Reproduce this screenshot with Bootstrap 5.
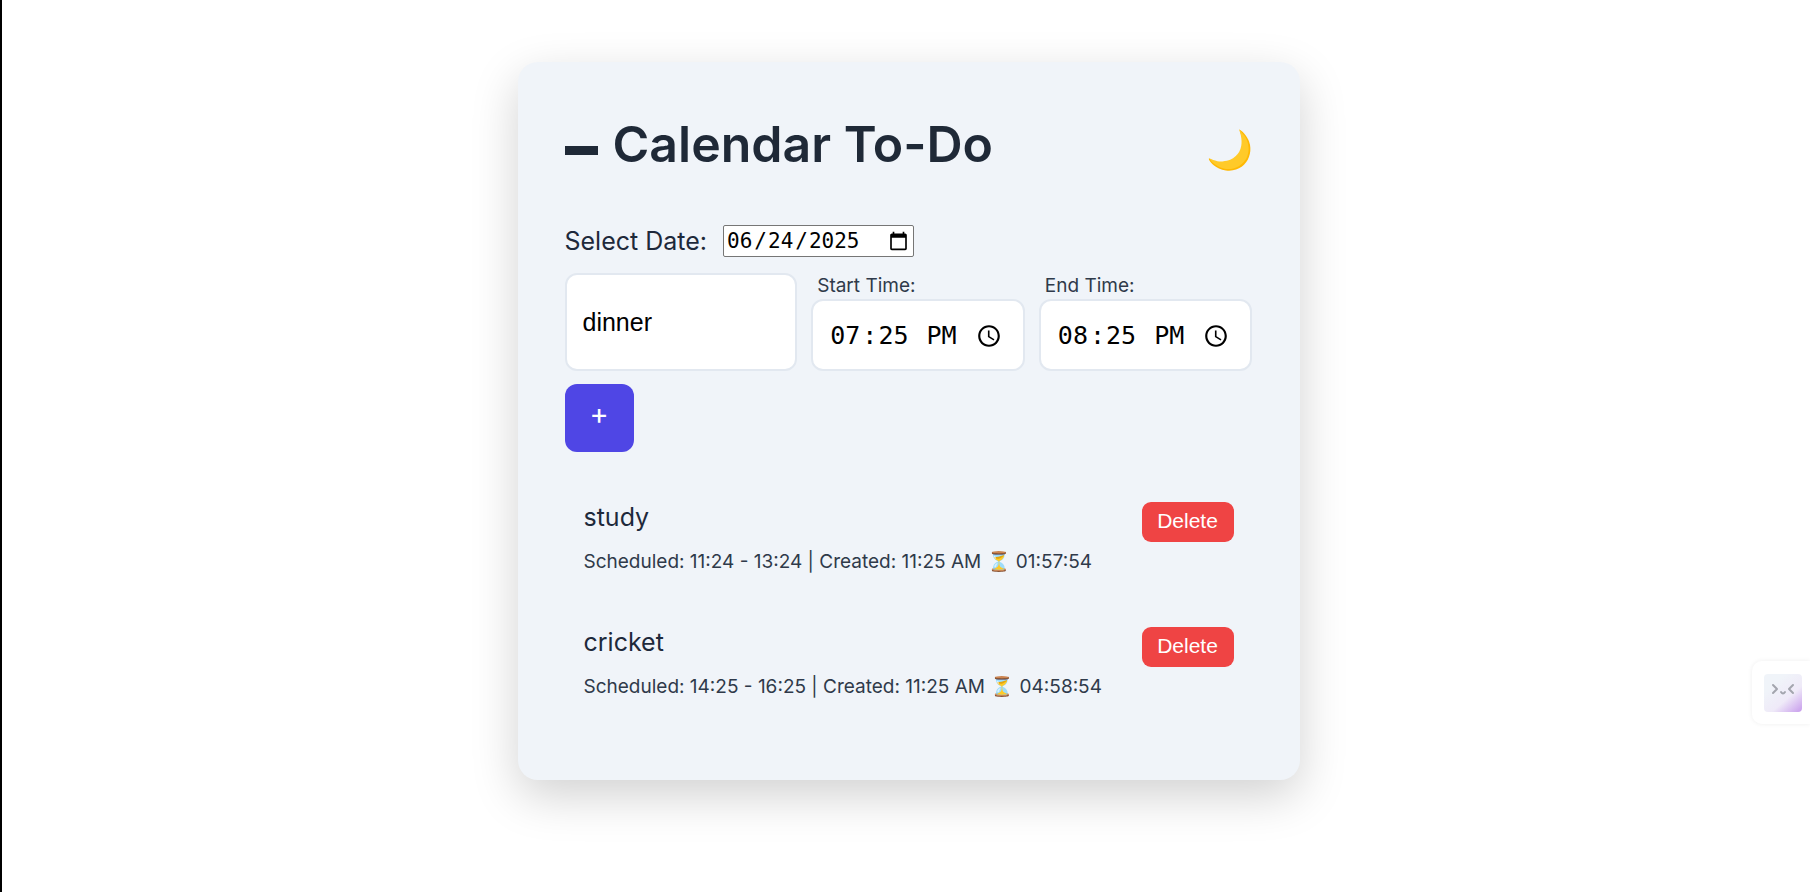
<!DOCTYPE html>
<html lang="en">
<head>
<meta charset="utf-8">
<meta name="viewport" content="width=device-width, initial-scale=1">
<title>Calendar To-Do</title>
<link href="https://cdn.jsdelivr.net/npm/bootstrap@5.3.0/dist/css/bootstrap.min.css" rel="stylesheet">
<style>
  body { font-family: Inter, "Liberation Sans", sans-serif; font-size: 25px; line-height: 30px; color: #1e293b; background: #fff; border-left: 2px solid #000; padding-left: 5px; min-height: 100vh; }
  .planner { max-width: 782px; margin-top: 62px; margin-bottom: 62px; padding: 47px; background: #f0f4f9; border-radius: 20px; box-shadow: 0 16px 47px rgba(0,0,0,.18); }
  .planner-head { height: 70px; margin-bottom: 46px; }
  .planner-title { font-size: 50px; line-height: 60px; font-weight: 600; color: #1f2937; }
  .title-bar { width: 33px; height: 9px; margin-right: 15px; background: #1f2937; margin-top: 12px; }
  .theme-btn { font-size: 38px; line-height: 44px; background: none; border: 0; padding: 0; margin-top: 10px; }
  .date-label { margin-right: 16px; }
  .date-box { font-family: "DejaVu Sans Mono", monospace; font-size: 21px; line-height: 25px; color: #000; background: #fff; border: 1px solid #767676; border-radius: 2px; padding: 2px; width: 191px; height: 32px; }
  .date-box::-webkit-datetime-edit-month-field,
  .date-box::-webkit-datetime-edit-day-field,
  .date-box::-webkit-datetime-edit-year-field { padding: 0 2px 0 1px; }
  .entry-form { gap: 13px 14px; margin-top: 16px; }
  .entry-box { width: 100%; font-size: 25px; line-height: 30px; color: #000; background: #fff; border: 2px solid #e2e8f0; border-radius: 12px; padding: 16px; }
  .task-col { flex: 232 1 0; }
  .time-col { flex: 213 1 0; }
  .task-col .entry-box { font-family: "Liberation Sans", Arial, sans-serif; height: 98px; }
  .time-col .entry-box { font-family: "DejaVu Sans Mono", monospace; height: 72px; padding: 17px 18px 15px 16px; }
  .time-col .entry-box::-webkit-datetime-edit-hour-field,
  .time-col .entry-box::-webkit-datetime-edit-minute-field,
  .time-col .entry-box::-webkit-datetime-edit-ampm-field { padding: 0 2px 0 1px; }
  .time-label { font-size: 19px; line-height: 22px; margin-bottom: 2px; padding-left: 6px; color: #2f3a4a; }
  .add-btn { font-family: Inter, sans-serif; width: 69px; height: 68px; border-radius: 12px; background: #4f46e5; color: #fff; font-size: 29px; line-height: 30px; padding: 0 0 8px; }
  .add-btn:hover { background: #4338ca; color: #fff; }
  .task-list { margin-top: 31px; }
  .task-row { padding: 19px; height: 125px; }
  .task-meta { font-size: 19px; line-height: 24px; margin-top: 18px; color: #2f3a4a; }
  .del-btn { font-family: "Liberation Sans", Arial, sans-serif; font-size: 21px; line-height: 24px; width: 92px; height: 40px; padding: 0 0 2px; border-radius: 9px; background: #ef4444; color: #fff; }
  .del-btn:hover { background: #dc2626; color: #fff; }
  .helper-tab { right: 0; top: 661px; padding: 13px 8px 12px 12px; background: #fff; border-radius: 10px 0 0 10px; box-shadow: 0 0 5px rgba(0,0,0,.07); border: 0; line-height: 0; }
</style>
</head>
<body>
<main class="planner mx-auto">
  <header class="planner-head d-flex justify-content-between align-items-center">
    <h1 class="planner-title d-flex align-items-center mb-0"><span class="title-bar"></span>Calendar To-Do</h1>
    <button type="button" class="theme-btn" aria-label="Switch theme">🌙</button>
  </header>
  <div class="d-flex align-items-center">
    <label class="date-label" for="day">Select Date:</label>
    <input class="date-box" type="date" id="day" value="2025-06-24">
  </div>
  <form class="entry-form d-flex flex-wrap align-items-end">
    <div class="task-col"><input class="entry-box d-block" type="text" value="dinner" aria-label="Task"></div>
    <div class="time-col">
      <label class="time-label d-block" for="start">Start Time:</label>
      <input class="entry-box d-block" type="time" id="start" value="19:25">
    </div>
    <div class="time-col">
      <label class="time-label d-block" for="end">End Time:</label>
      <input class="entry-box d-block" type="time" id="end" value="20:25">
    </div>
    <div class="w-100"><button type="button" class="btn border-0 add-btn" aria-label="Add task">+</button></div>
  </form>
  <ul class="task-list list-unstyled mb-0">
    <li class="task-row d-flex justify-content-between align-items-start">
      <div><div>study</div><div class="task-meta">Scheduled: 11:24 - 13:24 | Created: 11:25 AM ⏳ 01:57:54</div></div>
      <button type="button" class="btn border-0 del-btn">Delete</button>
    </li>
    <li class="task-row d-flex justify-content-between align-items-start">
      <div><div>cricket</div><div class="task-meta">Scheduled: 14:25 - 16:25 | Created: 11:25 AM ⏳ 04:58:54</div></div>
      <button type="button" class="btn border-0 del-btn">Delete</button>
    </li>
  </ul>
</main>
<button type="button" class="helper-tab position-fixed" aria-label="Open helper">
  <svg width="38" height="38" viewBox="0 0 38 38" fill="none">
    <defs>
      <linearGradient id="tile" x1="12" y1="8" x2="38" y2="38" gradientUnits="userSpaceOnUse">
        <stop offset="0" stop-color="#f0f4f9"/><stop offset=".5" stop-color="#efeaf8"/><stop offset="1" stop-color="#c79bec"/>
      </linearGradient>
    </defs>
    <rect width="38" height="38" rx="4" fill="url(#tile)"/>
    <path d="M9 11l4 4-4 4M29 11l-4 4 4 4M17 18q2 3 4 0" stroke="#a3a5ae" stroke-width="2" stroke-linecap="round" stroke-linejoin="round"/>
  </svg>
</button>
<script src="https://cdn.jsdelivr.net/npm/bootstrap@5.3.0/dist/js/bootstrap.bundle.min.js"></script>
</body>
</html>
